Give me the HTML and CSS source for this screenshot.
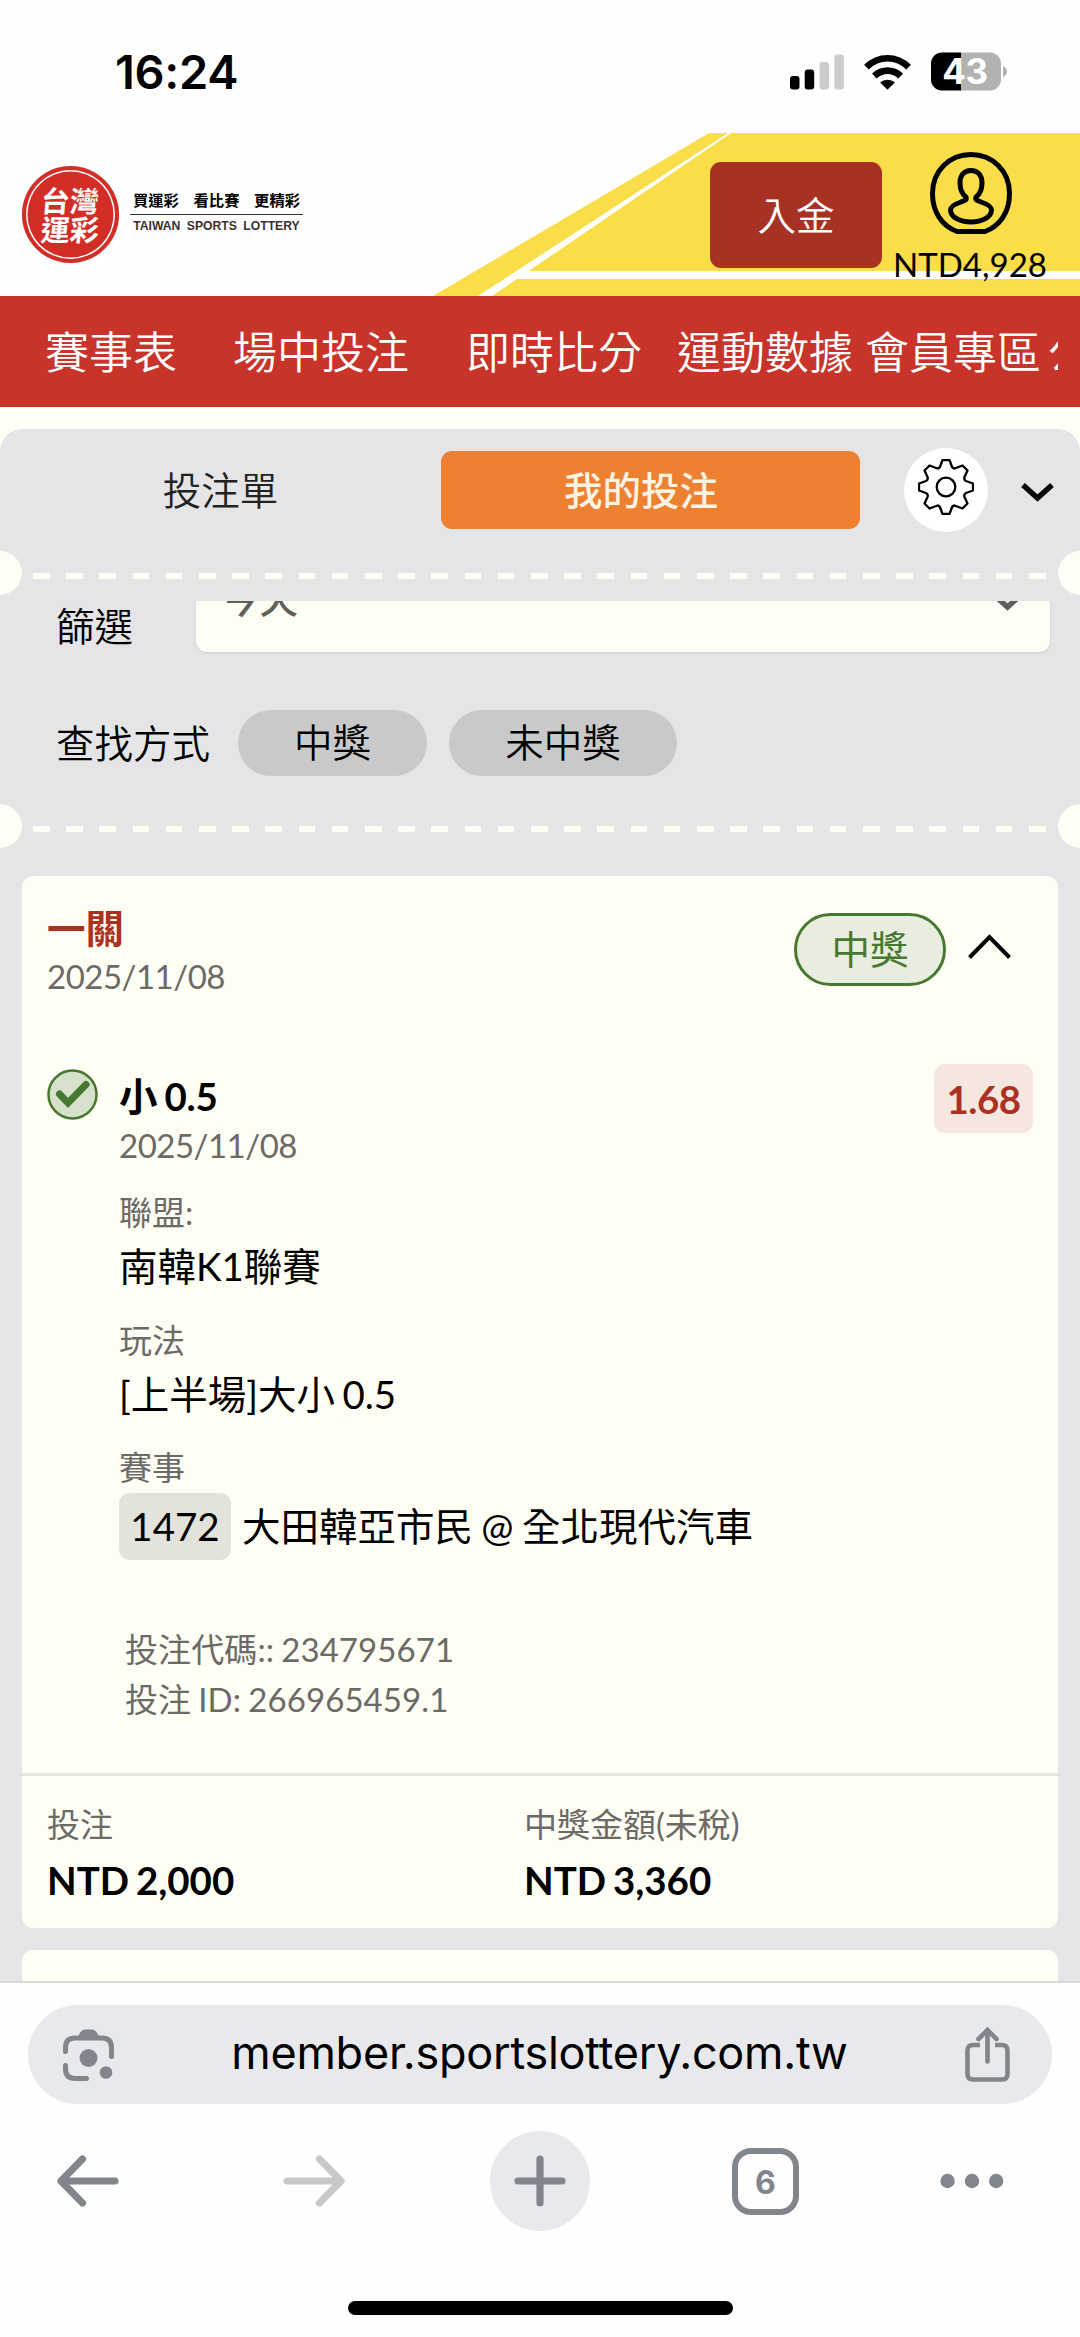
FILE: index.html
```html
<!DOCTYPE html>
<html lang="zh-Hant">
<head>
<meta charset="utf-8">
<title>台灣運彩</title>
<link rel="stylesheet" href="styles.css">
</head>
<body>
<div class="phone">
  <div class="status">
    <span class="time">16:24</span>
    <div class="status-icons">
      <svg width="54" height="36" viewBox="0 0 54 36"><rect y="22" width="9.5" height="13.5" rx="3"/><rect x="14.7" y="15.5" width="9.5" height="20" rx="3"/><g fill="#ccc"><rect x="29.5" y="8" width="9.5" height="27.5" rx="3"/><rect x="44.3" y="0.5" width="9.5" height="35" rx="3"/></g></svg>
      <svg width="47" height="36" viewBox="0 0 47 36"><g fill="none" stroke="#000" stroke-width="6.6"><path d="M2.4 13.2C14.500 1.300 32.500 1.300 44.600 13.200"/><path d="M10.300 22C18 14.800 29 14.800 36.700 22"/></g><path d="M16.200 28.500C20.500 24.700 26.500 24.700 30.800 28.500L23.500 35.800Z"/></svg>
      <svg class="battery" width="76" height="39" viewBox="0 0 76 39"><path d="M11 0.500H30V38.500H11A11 11 0 0 1 0 27.500V11.500A11 11 0 0 1 11 0.500Z"/><path d="M30 0.500H59A11 11 0 0 1 70 11.500V27.500A11 11 0 0 1 59 38.500H30Z" fill="#b2b2b2"/><path d="M72 14Q76 15.500 76 19.500T72 25Z" fill="#b2b2b2"/><text x="34" y="32" text-anchor="middle">43</text></svg>
    </div>
  </div>

  <header class="header">
    <svg class="header-bg" width="1080" height="163" viewBox="0 0 1080 163"><path d="M433 163L709 0H1080V163Z" fill="#f9de4a"/><path d="M478 163L728 0H731L492 163Z" fill="#fff"/><path d="M520 138H1080V146H508Z" fill="#fff"/></svg>
    <div class="brand">
      <div class="seal"><span>台灣</span><span>運彩</span></div>
      <div class="tagline">
        <div class="tag-zh"><span>買運彩</span><span>看比賽</span><span>更精彩</span></div>
        <div class="tag-en">TAIWAN SPORTS LOTTERY</div>
      </div>
    </div>
    <button class="deposit">入金</button>
    <div class="account">
      <svg width="82" height="82" viewBox="0 0 82 82" fill="none" stroke="#000" stroke-width="5"><path d="M27 79.500C12 74 2.500 60 2.500 41.500C2.500 19 19.500 2.500 41 2.500S79.500 19 79.500 41.500C79.500 60 70 74 55 79.500Z"/><path stroke-linejoin="round" d="M41 18.500C34 18.500 30 23.500 30 31C30 38 32 42 36 45C37 48 35 48.500 31 50C25 52 20.500 54.500 20.500 58C20.500 65 30 70 41 70S61.500 65 61.500 58C61.500 54.500 57 52 51 50C47 48.500 45 48 46 45C50 42 52 38 52 31C52 23.500 48 18.500 41 18.500Z"/></svg>
      <span class="balance">NTD4,928</span>
    </div>
  </header>

  <nav class="nav">
    <div class="nav-scroll"><span>賽事表</span><span>場中投注</span><span>即時比分</span><span>運動數據</span><span>會員專區</span><span>公告</span></div>
  </nav>

  <main class="slip">
    <div class="tabs">
      <span class="tab">投注單</span>
      <span class="tab tab-active">我的投注</span>
      <span class="gear"><svg width="56" height="56" viewBox="-28 -28 56 56" fill="none" stroke="#000" stroke-width="2.300" stroke-linejoin="round"><circle r="9.300"/><path d="M-3.500-27H3.500L5.500-21.500Q6-19 8.500-18.500L16.500-21.500L21.500-16.500L18.500-10Q17.500-7.500 20-6L27-3.500V3.500L20 6Q17.500 7.500 18.500 10L21.500 16.500L16.500 21.500L8.500 18.500Q6 19 5.500 21.500L3.500 27H-3.500L-5.500 21.500Q-6 19-8.500 18.500L-16.500 21.500L-21.500 16.500L-18.500 10Q-17.500 7.500-20 6L-27 3.500V-3.500L-20-6Q-17.500-7.500-18.500-10L-21.500-16.500L-16.500-21.500L-8.500-18.500Q-6-19-5.500-21.500Z"/></svg></span>
      <svg class="collapse" width="33" height="20" viewBox="0 0 33 20" fill="none" stroke="#0a0a0a" stroke-width="5.500"><path d="M2 3L16.500 16L31 3"/></svg>
    </div>
    <div class="perforation"><i></i></div>
    <div class="filters">
      <div class="filter-row">
        <span class="label">篩選</span>
        <div class="select"><span>今天</span><svg width="33" height="20" viewBox="0 0 33 20" fill="none" stroke="#5f5f5b" stroke-width="5.500"><path d="M2 3L16.500 16L31 3"/></svg></div>
      </div>
      <div class="find-row"><span class="label">查找方式</span><span class="pill">中獎</span><span class="pill pill-wide">未中獎</span></div>
    </div>
    <div class="perforation"><i></i></div>

    <section class="card">
      <div class="card-head">
        <div class="grow"><div class="title">一關</div><div class="muted date">2025/11/08</div></div>
        <span class="won">中獎</span>
        <svg width="43" height="25" viewBox="0 0 43 25" fill="none" stroke="#000" stroke-width="4"><path d="M1.500 23.500L21.500 3L41.500 23.500"/></svg>
      </div>
      <div class="bet">
        <svg class="check" width="51" height="51" viewBox="0 0 51 51"><circle cx="25.500" cy="25.500" r="24" fill="#d6e0ca" stroke="#47782f" stroke-width="2.500"/><path d="M12.500 25L21 34L39 15.500" fill="none" stroke="#47782f" stroke-width="7" stroke-linecap="round"/></svg>
        <div class="grow">
          <div class="pick">小 0.5</div>
          <div class="muted date">2025/11/08</div>
          <div class="muted term">聯盟:</div>
          <div class="value">南韓K1聯賽</div>
          <div class="muted term">玩法</div>
          <div class="value">[上半場]大小 0.5</div>
          <div class="muted term">賽事</div>
          <div class="match"><span class="code">1472</span><span>大田韓亞市民 @ 全北現代汽車</span></div>
          <div class="refs"><div>投注代碼:: 234795671</div><div>投注 ID: 266965459.1</div></div>
        </div>
        <span class="odds">1.68</span>
      </div>
      <div class="totals">
        <div><div class="muted">投注</div><div class="amount">NTD 2,000</div></div>
        <div><div class="muted">中獎金額(未稅)</div><div class="amount">NTD 3,360</div></div>
      </div>
    </section>
    <section class="card next"></section>
  </main>

  <footer class="browser">
    <div class="urlbar">
      <svg width="51" height="52" viewBox="0 0 51 52"><g fill="none" stroke="#80868b" stroke-width="5" stroke-linecap="round"><path d="M2.500 22.500V18.500Q2.500 9 12 9H39Q48.500 9 48.500 18.500V27.500"/><path d="M2.500 36.500V40Q2.500 49.500 12 49.500H23.500"/></g><path d="M14 9L17.500 3Q19 0.500 22 0.500H29Q32 0.500 33.500 3L37 9Z" fill="#80868b"/><circle cx="25.500" cy="29" r="9" fill="#80868b"/><circle cx="43" cy="43.500" r="6.300" fill="#80868b"/></svg>
      <span class="url">member.sportslottery.com.tw</span>
      <svg width="45" height="56" viewBox="0 0 45 56" fill="none" stroke="#80868b" stroke-width="4.600"><path d="M15 18H8Q2.500 18 2.500 23.500V47Q2.500 52.500 8 52.500H37Q42.500 52.500 42.500 47V23.500Q42.500 18 37 18H30"/><path stroke-linecap="round" d="M22.500 34.500V3.500M13.500 12L22.500 3L31.500 12"/></svg>
    </div>
    <div class="toolbar">
      <svg width="62" height="52" viewBox="0 0 62 52" fill="none" stroke="#80868b" stroke-width="7.200" stroke-linecap="round" stroke-linejoin="round"><path d="M25.500 4L4 26L25.500 48M5 26H58"/></svg>
      <svg class="forward" width="62" height="52" viewBox="0 0 62 52" fill="none" stroke="#c8c8c8" stroke-width="7.200" stroke-linecap="round" stroke-linejoin="round"><path d="M36.500 4L58 26L36.500 48M57 26H4"/></svg>
      <span class="plus"><svg width="52" height="52" viewBox="0 0 52 52" stroke="#80868b" stroke-width="7.200" stroke-linecap="round"><path d="M26 4V48M4 26H48"/></svg></span>
      <span class="tabcount">6</span>
      <svg class="more" width="64" height="16" viewBox="0 0 64 16" fill="#80868b"><circle cx="7.500" cy="8" r="7.200"/><circle cx="32" cy="8" r="7.200"/><circle cx="56.200" cy="8" r="7.200"/></svg>
    </div>
    <div class="home-indicator"></div>
  </footer>
</div>
</body>
</html>
```
FILE: styles.css
```css
* { box-sizing: border-box; }
body { margin: 0; background: #fff; }
svg { display: block; flex: none; }

.phone {
  width: 1080px;
  height: 2337px;
  overflow: hidden;
  display: flex;
  flex-direction: column;
  background: #fefefe;
  color: #000;
  font-family: Lato, "Noto Sans CJK TC", sans-serif;
  font-size: 38.5px;
  line-height: 50px;
  word-spacing: -2.500px;
  white-space: nowrap;
}

/* Status bar */
.status {
  height: 133px;
  flex: none;
  display: flex;
  justify-content: space-between;
  padding: 52px 73px 0 115px;
}
.time { font: 600 47px/40px Inter, sans-serif; letter-spacing: -0.3px; }
.status-icons { display: flex; gap: 20px; padding-top: 1.500px; }
.battery { margin-top: -1.500px; }
.battery text { font: 700 35px Inter, sans-serif; fill: #fff; letter-spacing: -0.5px; }

/* Site header */
.header {
  position: relative;
  height: 163px;
  flex: none;
  display: flex;
  align-items: flex-start;
  padding-left: 22px;
}
.header-bg { position: absolute; left: 0; top: 0; z-index: 0; }
.brand, .deposit, .account { position: relative; }
.brand { display: flex; width: 688px; padding-top: 33px; }
.seal {
  width: 97px;
  height: 97px;
  border-radius: 50%;
  background: #d22d26;
  box-shadow: inset 0 0 0 4px #d22d26, inset 0 0 0 5.500px #fff;
  color: #fff;
  font: 700 29px/29px "Noto Sans CJK TC", sans-serif;
  display: flex;
  flex-direction: column;
  align-items: center;
  padding-top: 19px;
}
.seal span { transform: skewX(-5deg); }
.tagline { margin-left: 11px; width: 173px; padding-top: 17px; }
.tag-zh {
  display: flex;
  justify-content: space-between;
  height: 32px;
  padding: 0 3px;
  border-bottom: 1.500px solid #333;
  font: 700 15.300px/20px "Noto Sans CJK TC", sans-serif;
  align-items: center;
}
.tag-en {
  font: 700 12.200px/22px "Liberation Sans", sans-serif;
  text-align: center;
  color: #3b3030;
  word-spacing: 3px;
}
.deposit {
  width: 172px;
  height: 106px;
  margin-top: 29px;
  padding: 0;
  border: 0;
  border-radius: 11px;
  background: #a73224;
  color: #fff;
  font: 350 38.500px/50px Lato, "Noto Sans CJK TC", sans-serif;
}
.account {
  width: 178px;
  display: flex;
  flex-direction: column;
  align-items: center;
  padding: 19px 0 0 0;
}
.balance { font-size: 33px; line-height: 40px; margin: 10px 2px 0 0; }

/* Navigation */
.nav {
  height: 111px;
  flex: none;
  padding: 0 22px;
  background: #c8332a;
}
.nav-scroll {
  display: flex;
  height: 111px;
  overflow: hidden;
  color: #fff;
  font-size: 44px;
  line-height: 112px;
  font-weight: 350;
}
.nav-scroll span { margin-left: 12px; flex: none; }
.nav-scroll span:first-child { margin-left: 23px; }
.nav-scroll span:nth-child(2) { margin-left: 56px; }
.nav-scroll span:nth-child(3) { margin-left: 57px; }
.nav-scroll span:nth-child(4) { margin-left: 35px; }
.nav-scroll span:last-child { margin-left: 7px; }

/* Bet slip */
.slip {
  height: 1576px;
  flex: none;
  overflow: hidden;
  background: #e5e5e7;
  border-top: 22px solid #fffef5;
  border-bottom: 2px solid #d9d9d7;
}
.slip::before {
  content: "";
  display: block;
  height: 22px;
  margin-bottom: -22px;
  background: radial-gradient(circle at 22px 22px, #e5e5e7 21.500px, #fffef5 22px) 0 0 / 22px 22px no-repeat,
    radial-gradient(circle at 0 22px, #e5e5e7 21.500px, #fffef5 22px) 100% 0 / 22px 22px no-repeat;
}
.tabs {
  display: flex;
  align-items: center;
  height: 122px;
}
.tab { width: 441px; text-align: center; color: #222; font-weight: 350; }
.tab-active {
  width: 419px;
  line-height: 78px;
  border-radius: 11px;
  background: #ee8032;
  color: #fdf3e3;
  font-weight: 500;
  padding-right: 19px;
}
.gear {
  width: 84px;
  height: 84px;
  margin: 0 33px 0 44px;
  border-radius: 50%;
  background: #fff;
  display: flex;
  justify-content: center;
  padding-top: 11px;
}
.collapse { margin-top: 3px; }
.perforation {
  height: 44px;
  display: flex;
  padding: 22px 33px 0;
  background: radial-gradient(circle at 0 50%, #fffef5 21.500px, transparent 22px),
    radial-gradient(circle at 100% 50%, #fffef5 21.500px, transparent 22px);
}
.perforation i {
  flex: 1;
  height: 6px;
  background: repeating-linear-gradient(90deg, #fffef5 0 16.600px, transparent 16.600px 33.200px);
}
.filters { margin-top: 6px; height: 203px; overflow: hidden; }
.filter-row { display: flex; height: 51px; padding-left: 56px; }
.label { font-weight: 350; line-height: 51px; }
.filter-row .label { width: 140px; }
.select {
  width: 854px;
  height: 103px;
  margin-top: -52px;
  display: flex;
  justify-content: space-between;
  align-items: center;
  padding: 0 26px 0 25px;
  border-radius: 11px;
  background: #fffef5;
  box-shadow: 0 1px 3px rgba(120, 120, 60, 0.2);
  color: #5f5f5b;
  font-weight: 500;
}
.select span { margin-top: -5px; }
.find-row { display: flex; align-items: center; padding-left: 56px; margin-top: 58px; }
.find-row .label { width: 182px; }
.pill {
  width: 189px;
  height: 66px;
  line-height: 65px;
  border-radius: 33px;
  background: #c9c9c9;
  text-align: center;
  font-weight: 350;
}
.pill-wide { width: 228px; margin-left: 22px; }

/* Bet card */
.card { margin: 28px 22px 0; border-radius: 11px; background: #fffef5; }
.grow { flex: 1; }
.muted { font-size: 33px; line-height: 44px; color: #6b6a66; }
.date { letter-spacing: -0.500px; }
.card-head { display: flex; padding: 30px 47px 0 25px; height: 188px; }
.title { font-weight: 700; line-height: 44px; color: #ab3223; margin-bottom: 4px; }
.won {
  width: 152px;
  height: 73px;
  margin: 7px 22px 0 0;
  border: 3px solid #47782f;
  border-radius: 37px;
  background: #e9eddf;
  color: #47782f;
  text-align: center;
  line-height: 66px;
}
.card-head > svg { margin-top: 28px; }
.bet { display: flex; height: 709px; padding: 0 25px; }
.check { margin: 5px 21px 0 0; }
.pick { font-weight: 700; margin: 7px 0 2px; letter-spacing: -0.200px; word-spacing: -2px; }
.term { margin: 23px 0 7px; }
.value + .term { margin-top: 26.500px; }
.match { display: flex; gap: 11px; line-height: 67px; margin-top: -3px; word-spacing: -1.500px; }
.code { width: 112px; border-radius: 11px; background: #e3e3dc; text-align: center; }
.refs { font-size: 33px; line-height: 49.500px; color: #6b6a66; padding: 65px 0 0 6px; letter-spacing: 0.100px; word-spacing: -1.500px; }
.odds {
  width: 99px;
  height: 69px;
  line-height: 71px;
  border-radius: 11px;
  background: #f5e7df;
  color: #ab3223;
  text-align: center;
  font-weight: 700;
  letter-spacing: -0.500px;
}
.totals {
  display: grid;
  grid-template-columns: 477px 1fr;
  height: 155px;
  padding: 26px 25px 0;
  border-top: 3px solid #e4e4dd;
}
.amount { font-weight: 700; margin-top: 9px; }
.next { margin-top: 22px; height: 60px; }

/* Browser chrome */
.browser { display: flex; flex-direction: column; align-items: center; padding-top: 22px; }
.urlbar {
  width: 1024px;
  height: 99px;
  border-radius: 50px;
  background: #e8e9ed;
  display: flex;
  justify-content: space-between;
  align-items: center;
  padding: 0 42px 0 35px;
}
.url { font: 400 45px/60px Inter, sans-serif; letter-spacing: -0.250px; margin-top: -3px; }
.toolbar {
  width: 1080px;
  height: 100px;
  margin-top: 27px;
  padding-left: 57px;
  display: flex;
  align-items: center;
}
.forward { margin: 0 145px 0 164px; }
.plus {
  width: 100px;
  height: 100px;
  border-radius: 50%;
  background: #e8e9ed;
  display: flex;
  align-items: center;
  justify-content: center;
}
.tabcount {
  width: 67px;
  height: 67px;
  margin: 0 141px 0 142px;
  border: 6px solid #80868b;
  border-radius: 19px;
  color: #80868b;
  font: 700 32px/57px Inter, sans-serif;
  text-align: center;
}
.home-indicator { width: 385px; height: 14px; margin-top: 70px; border-radius: 7px; background: #000; }
```
